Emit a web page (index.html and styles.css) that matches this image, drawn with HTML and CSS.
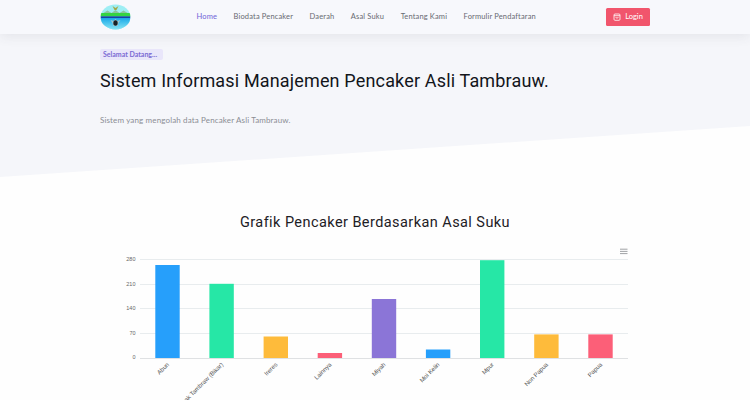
FILE: index.html
```html
<!DOCTYPE html>
<html lang="id">
<head>
<meta charset="utf-8">
<title>Sistem Informasi Manajemen Pencaker</title>
<link rel="stylesheet" href="styles.css">
</head>
<body>
<header class="header">
  <div class="container bar">
    <svg class="logo" viewBox="0 0 30 26">
      <defs>
        <clipPath id="oval"><ellipse cx="15" cy="13" rx="15" ry="12.5"/></clipPath>
        <linearGradient id="sea" x1="0" y1="0" x2="0" y2="1"><stop offset="0" stop-color="#18a8e8"/><stop offset="1" stop-color="#8de9f5"/></linearGradient>
      </defs>
      <g clip-path="url(#oval)">
        <rect width="30" height="26" fill="#9eeef4"/>
        <path d="M2 9.5 7 6.5l4 2.5 4-3 4 3 4-2.5 5 3v2H2z" fill="#8cc5a0"/>
        <rect y="9" width="30" height="3.4" fill="#35d443"/>
        <rect y="12.3" width="30" height="1.9" fill="#1645a4"/>
        <rect y="14" width="30" height="12" fill="url(#sea)"/>
        <path d="M12 2l3 2 3-2-2 4h-2z" fill="#a5a647"/>
        <path d="M10 16l3 1 2-2 2 2 3-1-2 3-1 3h-4l-1-3z" fill="#a5c9cc"/>
        <ellipse cx="15" cy="19" rx="2.2" ry="2.8" fill="#182326"/>
      </g>
    </svg>
    <nav class="nav">
      <a class="active">Home</a><a>Biodata Pencaker</a><a>Daerah</a><a>Asal Suku</a><a>Tentang Kami</a><a>Formulir Pendaftaran</a>
    </nav>
    <a class="login">
      <svg class="bag" viewBox="0 0 8 8"><rect x="1" y="1" width="6" height="6.3" rx="1"/><path d="M1 2.7h6M2.7 4.1c.3 1.4 2.3 1.4 2.6 0"/></svg>
      Login
    </a>
  </div>
</header>
<section class="hero">
  <div class="container">
    <span class="badge">Selamat Datang...</span>
    <h1>Sistem Informasi Manajemen Pencaker Asli Tambrauw.</h1>
    <p>Sistem yang mengolah data Pencaker Asli Tambrauw.</p>
  </div>
</section>
<section class="container report">
  <h2>Grafik Pencaker Berdasarkan Asal Suku</h2>
  <svg class="chart" viewBox="100 240 550 160">
    <path class="menu" d="M620 249.2h7.5M620 251.4h7.5M620 253.6h7.5"/>
    <path class="grid" d="M140 259.5h488M140 284.5h488M140 308.5h488M140 333.5h488"/>
    <path class="axis" d="M140 358.5h488"/>
    <g class="ticks">
      <text x="135.5" y="260.5">280</text><text x="135.5" y="285.5">210</text><text x="135.5" y="310">140</text><text x="135.5" y="334.5">70</text><text x="135.5" y="359">0</text>
    </g>
    <rect class="blue" x="155.3" y="265" width="24.4" height="93"/>
    <rect class="green" x="209.4" y="283.8" width="24.4" height="74.2"/>
    <rect class="amber" x="263.6" y="336.5" width="24.4" height="21.5"/>
    <rect class="red" x="317.7" y="353" width="24.4" height="5"/>
    <rect class="purple" x="371.8" y="299" width="24.4" height="59"/>
    <rect class="blue" x="425.9" y="349.5" width="24.4" height="8.5"/>
    <rect class="green" x="480" y="260.2" width="24.4" height="97.8"/>
    <rect class="amber" x="534.2" y="334.4" width="24.4" height="23.6"/>
    <rect class="red" x="588.3" y="334.4" width="24.4" height="23.6"/>
    <g class="labels">
      <text transform="translate(169.5 365) rotate(-45)">Abun</text>
      <text transform="translate(223.6 365) rotate(-45)">Bak Tambraw (Bikar)</text>
      <text transform="translate(277.8 365) rotate(-45)">Ireres</text>
      <text transform="translate(331.9 365) rotate(-45)">Lainnya</text>
      <text transform="translate(386 365) rotate(-45)">Miyah</text>
      <text transform="translate(440 365) rotate(-45)">Moi Kelin</text>
      <text transform="translate(494.3 365) rotate(-45)">Mpur</text>
      <text transform="translate(548.5 365) rotate(-45)">Non Papua</text>
      <text transform="translate(602.6 365) rotate(-45)">Papua</text>
    </g>
  </svg>
</section>
</body>
</html>
```
FILE: styles.css
```css
* { box-sizing: border-box; }
body { margin: 0; height: 400px; overflow: hidden; background: #fefefe; font-family: Lato, sans-serif; }
.container { width: 550px; margin: 0 auto; }
.header { position: relative; z-index: 1; height: 34px; background: #f7f8fc; box-shadow: 0 3px 12px rgba(65, 65, 75, .09); }
.bar { display: flex; align-items: center; height: 33px; }
.logo { width: 31px; height: 26px; }
.nav { display: flex; gap: 16.5px; margin-left: 65.5px; font-size: 7.5px; letter-spacing: .15px; color: #686a72; white-space: nowrap; }
.nav .active { color: #7065d8; }
.login { display: flex; align-items: center; justify-content: center; gap: 4px; width: 44px; height: 18px; margin-left: auto; border-radius: 1.5px; background: #f1556c; color: #fff; font-size: 7.5px; }
.bag { width: 8px; height: 8px; fill: none; stroke: #fff; stroke-width: .8; }
.hero { height: 144px; padding-top: 15px; background: #f5f6fa; clip-path: polygon(0 0, 100% 0, 100% 92px, 0 143px); }
.badge { display: block; width: 63px; height: 11px; padding-left: 3px; border-radius: 2px; background: #e9e6fa; color: #7b6bd4; font-size: 7px; font-weight: 700; line-height: 10px; white-space: nowrap; }
h1 { margin: 8px 0 0; font: 400 18px/25px Roboto, sans-serif; letter-spacing: .16px; color: #12151a; white-space: nowrap; }
.hero p { margin: 21px 0 0; font-size: 8px; line-height: 12px; letter-spacing: .14px; color: #8b8d94; white-space: nowrap; }
.report { height: 222px; padding-top: 32px; }
h2 { margin: 0; font: 400 14.5px/25px Roboto, sans-serif; letter-spacing: .43px; color: #1d2025; text-align: center; }
.chart { display: block; width: 550px; height: 160px; margin-top: 5px; }
.grid { stroke: #e8ecee; }
.axis { stroke: #dfe1e3; }
.menu { stroke: #a0a3a6; }
.ticks { fill: #666; font: 5.5px "Liberation Sans", sans-serif; text-anchor: end; }
.labels { fill: #555; font: 6.1px "Liberation Sans", sans-serif; text-anchor: end; }
.blue { fill: #269ffb; }
.green { fill: #26e7a6; }
.amber { fill: #febb3b; }
.red { fill: #fc5f78; }
.purple { fill: #8b75d7; }
```
